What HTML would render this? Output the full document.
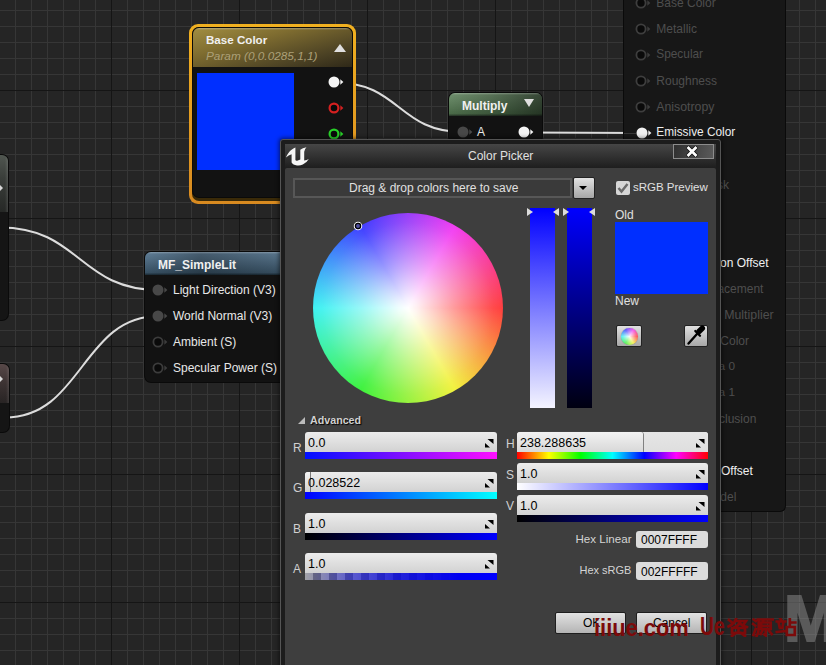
<!DOCTYPE html>
<html><head><meta charset="utf-8">
<style>
*{margin:0;padding:0;box-sizing:border-box}
html,body{width:826px;height:665px;overflow:hidden}
body{position:relative;font-family:"Liberation Sans",sans-serif;font-size:12px;color:#e8e8e8;
background-color:#252525;
background-image:
 linear-gradient(to right,#151515 1px,transparent 1px),
 linear-gradient(to bottom,#151515 1px,transparent 1px),
 linear-gradient(to right,#363636 1px,transparent 1px),
 linear-gradient(to bottom,#363636 1px,transparent 1px);
background-size:128px 665px,826px 128px,16px 665px,826px 16px;
background-position:111px 0,0 90px,15px 0,0 10px;
}
.a{position:absolute}
.t{position:absolute;white-space:nowrap;line-height:1}
svg.w{position:absolute;left:0;top:0}
.node{position:absolute;background:#121212;border-radius:6px;box-shadow:0 0 0 1px #0a0a0a}
</style></head><body>
<svg class="w" width="826" height="665" viewBox="0 0 826 665">
 <g fill="none" stroke="#dcdcdc" stroke-width="2">
  <path d="M335 82.5 C 400 82.5, 398 132, 463 132"/>
  <path d="M524 132.5 L 642 133"/>
  <path d="M0 227.5 C 80 227.5, 79 290, 159 290"/>
  <path d="M5 417.5 C 82 417.5, 82 316, 159 316"/>
 </g>
</svg>
<div class="node" style="left:-20px;top:155px;width:28px;height:165px;background:#151515;overflow:hidden"><div class="a" style="left:0;top:0;width:28px;height:57px;background:linear-gradient(to left,rgba(255,255,255,0.12) 0,rgba(255,255,255,0) 3px),linear-gradient(#505650,#3a3e3a 40%,#262826)"></div></div>
<div class="node" style="left:-20px;top:364px;width:29px;height:68px;background:#151515;overflow:hidden"><div class="a" style="left:0;top:0;width:29px;height:39px;background:linear-gradient(to left,rgba(255,255,255,0.1) 0,rgba(255,255,255,0) 3px),linear-gradient(#574848,#3e3434 45%,#282424)"></div></div>
<div class="a" style="left:0;top:185px;width:0;height:0;border-top:3px solid transparent;border-bottom:3px solid transparent;border-left:3px solid #d8d8d8"></div>
<div class="a" style="left:0;top:376px;width:0;height:0;border-top:3px solid transparent;border-bottom:3px solid transparent;border-left:3px solid #d8d8d8"></div>
<div class="a" style="left:189px;top:24px;width:167px;height:180px;background:linear-gradient(#f0b020,#d88a20);border-radius:9px"></div>
<div class="a" style="left:192px;top:27px;width:161px;height:174px;background:#3a2a08;border-radius:7px"></div>
<div class="node" style="left:193px;top:28px;width:159px;height:169px;border-radius:6px;overflow:hidden;background:#121212"><div class="a" style="left:0;top:0;width:159px;height:39px;background:linear-gradient(rgba(255,255,255,0.3) 0,rgba(255,255,255,0) 2px),linear-gradient(165deg,#a28e42 0%,#7e6c30 35%,#4c4224 75%,#2e2818 100%)"></div><div class="a" style="left:4px;top:45px;width:97px;height:97px;background:#002fff"></div></div>
<div class="t" style="left:206px;top:34.3px;color:#f0f0f0;font-size:11.6px;font-weight:bold;font-style:normal;">Base Color</div>
<div class="t" style="left:206px;top:50.7px;color:#aca078;font-size:11.8px;font-weight:normal;font-style:italic;">Param (0,0.0285,1,1)</div>
<div class="a" style="left:334px;top:44px;width:0;height:0;border-left:6px solid transparent;border-right:6px solid transparent;border-bottom:8px solid #e0e0e0"></div>
<svg class="a" style="left:326.3px;top:74.4px" width="20" height="16" viewBox="0 0 20 16"><circle cx="8" cy="8" r="5.5" fill="#f4f4f4"/><path d="M14.3,5.3 L17.4,8 L14.3,10.7 Z" fill="#f4f4f4"/></svg>
<svg class="a" style="left:326.2px;top:100.3px" width="20" height="16" viewBox="0 0 20 16"><circle cx="8" cy="8" r="4.4" fill="#0a0a0a" stroke="#d42020" stroke-width="2.2"/><path d="M14.3,5.3 L17.4,8 L14.3,10.7 Z" fill="#d42020"/></svg>
<svg class="a" style="left:326.2px;top:126.19999999999999px" width="20" height="16" viewBox="0 0 20 16"><circle cx="8" cy="8" r="4.4" fill="#0a0a0a" stroke="#28d028" stroke-width="2.2"/><path d="M14.3,5.3 L17.4,8 L14.3,10.7 Z" fill="#28d028"/></svg>
<div class="node" style="left:145px;top:252px;width:160px;height:130px;overflow:hidden;background:#121212"><div class="a" style="left:0;top:0;width:160px;height:23px;background:linear-gradient(rgba(255,255,255,0.25) 0,rgba(255,255,255,0) 2px),linear-gradient(to right,rgba(0,0,0,0.05) 0%,rgba(0,0,0,0.3) 35%,rgba(0,0,0,0.05) 100%),linear-gradient(#6686a0,#3a5468 90%,#1a2a34)"></div></div>
<div class="t" style="left:158px;top:259px;color:#f0f0f0;font-size:12px;font-weight:bold;font-style:normal;">MF_SimpleLit</div>
<div class="t" style="left:173px;top:284px;color:#e8e8e8;font-size:12px;font-weight:normal;font-style:normal;">Light Direction (V3)</div>
<div class="t" style="left:173px;top:310px;color:#e8e8e8;font-size:12px;font-weight:normal;font-style:normal;">World Normal (V3)</div>
<div class="t" style="left:173px;top:336px;color:#e8e8e8;font-size:12px;font-weight:normal;font-style:normal;">Ambient (S)</div>
<div class="t" style="left:173px;top:362px;color:#e8e8e8;font-size:12px;font-weight:normal;font-style:normal;">Specular Power (S)</div>
<svg class="a" style="left:150.3px;top:282.1px" width="20" height="16" viewBox="0 0 20 16"><circle cx="8" cy="8" r="5.5" fill="#484848"/><path d="M14.3,5.3 L17.4,8 L14.3,10.7 Z" fill="#484848"/></svg>
<svg class="a" style="left:150.3px;top:308.3px" width="20" height="16" viewBox="0 0 20 16"><circle cx="8" cy="8" r="5.5" fill="#484848"/><path d="M14.3,5.3 L17.4,8 L14.3,10.7 Z" fill="#484848"/></svg>
<svg class="a" style="left:150.3px;top:334.2px" width="20" height="16" viewBox="0 0 20 16"><circle cx="8" cy="8" r="4.6" fill="#0a0a0a" stroke="#3c3c3c" stroke-width="1.8"/><path d="M14.3,5.3 L17.4,8 L14.3,10.7 Z" fill="#3c3c3c"/></svg>
<svg class="a" style="left:150.3px;top:360.3px" width="20" height="16" viewBox="0 0 20 16"><circle cx="8" cy="8" r="4.6" fill="#0a0a0a" stroke="#3c3c3c" stroke-width="1.8"/><path d="M14.3,5.3 L17.4,8 L14.3,10.7 Z" fill="#3c3c3c"/></svg>
<div class="node" style="left:449px;top:93px;width:93px;height:50px;overflow:hidden;background:#121212"><div class="a" style="left:0;top:0;width:93px;height:23px;background:linear-gradient(rgba(255,255,255,0.25) 0,rgba(255,255,255,0) 2px),linear-gradient(to right,rgba(0,0,0,0) 0%,rgba(0,0,0,0.2) 45%,rgba(0,0,0,0.5) 100%),linear-gradient(#729270,#4a6a48 90%,#243024)"></div></div>
<div class="t" style="left:462px;top:100px;color:#f0f0f0;font-size:12px;font-weight:bold;font-style:normal;">Multiply</div>
<div class="a" style="left:524px;top:99px;width:0;height:0;border-left:5.5px solid transparent;border-right:5.5px solid transparent;border-top:8px solid #e0e0e0"></div>
<div class="t" style="left:477px;top:126px;color:#e8e8e8;font-size:12px;font-weight:normal;font-style:normal;">A</div>
<svg class="a" style="left:455.2px;top:124.4px" width="20" height="16" viewBox="0 0 20 16"><circle cx="8" cy="8" r="5.5" fill="#484848"/><path d="M14.3,5.3 L17.4,8 L14.3,10.7 Z" fill="#484848"/></svg>
<svg class="a" style="left:516.3px;top:124.4px" width="20" height="16" viewBox="0 0 20 16"><circle cx="8" cy="8" r="5.5" fill="#f4f4f4"/><path d="M14.3,5.3 L17.4,8 L14.3,10.7 Z" fill="#f4f4f4"/></svg>
<div class="node" style="left:624px;top:-20px;width:161px;height:531px;background:#171717;border-radius:5px"></div>
<div class="t" style="left:656.3px;top:-2.6999999999999997px;color:#4e4e4e;font-size:12px;font-weight:normal;font-style:normal;">Base Color</div>
<svg class="a" style="left:633.4px;top:-4.6px" width="20" height="16" viewBox="0 0 20 16"><circle cx="8" cy="8" r="4.6" fill="#0a0a0a" stroke="#3e3e3e" stroke-width="1.8"/><path d="M14.3,5.3 L17.4,8 L14.3,10.7 Z" fill="#3e3e3e"/></svg>
<div class="t" style="left:656.3px;top:23.299999999999997px;color:#4e4e4e;font-size:12px;font-weight:normal;font-style:normal;">Metallic</div>
<svg class="a" style="left:633.4px;top:21.4px" width="20" height="16" viewBox="0 0 20 16"><circle cx="8" cy="8" r="4.6" fill="#0a0a0a" stroke="#3e3e3e" stroke-width="1.8"/><path d="M14.3,5.3 L17.4,8 L14.3,10.7 Z" fill="#3e3e3e"/></svg>
<div class="t" style="left:656.3px;top:49.3px;color:#4e4e4e;font-size:11.85px;font-weight:normal;font-style:normal;">Specular</div>
<svg class="a" style="left:633.4px;top:47.4px" width="20" height="16" viewBox="0 0 20 16"><circle cx="8" cy="8" r="4.6" fill="#0a0a0a" stroke="#3e3e3e" stroke-width="1.8"/><path d="M14.3,5.3 L17.4,8 L14.3,10.7 Z" fill="#3e3e3e"/></svg>
<div class="t" style="left:656.3px;top:75.30000000000001px;color:#4e4e4e;font-size:12px;font-weight:normal;font-style:normal;">Roughness</div>
<svg class="a" style="left:633.4px;top:73.4px" width="20" height="16" viewBox="0 0 20 16"><circle cx="8" cy="8" r="4.6" fill="#0a0a0a" stroke="#3e3e3e" stroke-width="1.8"/><path d="M14.3,5.3 L17.4,8 L14.3,10.7 Z" fill="#3e3e3e"/></svg>
<div class="t" style="left:656.3px;top:101.30000000000001px;color:#4e4e4e;font-size:12.3px;font-weight:normal;font-style:normal;">Anisotropy</div>
<svg class="a" style="left:633.4px;top:99.4px" width="20" height="16" viewBox="0 0 20 16"><circle cx="8" cy="8" r="4.6" fill="#0a0a0a" stroke="#3e3e3e" stroke-width="1.8"/><path d="M14.3,5.3 L17.4,8 L14.3,10.7 Z" fill="#3e3e3e"/></svg>
<div class="t" style="left:656.3px;top:127.30000000000001px;color:#f0f0f0;font-size:11.85px;font-weight:normal;font-style:normal;">Emissive Color</div>
<div class="a" style="left:624px;top:132.9px;width:12px;height:1px;background:#383838;"></div>
<svg class="a" style="left:633.5px;top:125.4px" width="20" height="16" viewBox="0 0 20 16"><circle cx="8" cy="8" r="5.5" fill="#f0f0f0"/><path d="M14.3,5.3 L17.4,8 L14.3,10.7 Z" fill="#f0f0f0"/></svg>
<div class="t" style="left:656.3px;top:153.3px;color:#4e4e4e;font-size:12px;font-weight:normal;font-style:normal;">Opacity</div>
<svg class="a" style="left:633.4px;top:151.4px" width="20" height="16" viewBox="0 0 20 16"><circle cx="8" cy="8" r="4.6" fill="#0a0a0a" stroke="#3e3e3e" stroke-width="1.8"/><path d="M14.3,5.3 L17.4,8 L14.3,10.7 Z" fill="#3e3e3e"/></svg>
<div class="t" style="left:656.3px;top:179.3px;color:#4e4e4e;font-size:12px;font-weight:normal;font-style:normal;">Opacity Mask</div>
<svg class="a" style="left:633.4px;top:177.4px" width="20" height="16" viewBox="0 0 20 16"><circle cx="8" cy="8" r="4.6" fill="#0a0a0a" stroke="#3e3e3e" stroke-width="1.8"/><path d="M14.3,5.3 L17.4,8 L14.3,10.7 Z" fill="#3e3e3e"/></svg>
<div class="t" style="left:656.3px;top:205.3px;color:#4e4e4e;font-size:12px;font-weight:normal;font-style:normal;">Normal</div>
<svg class="a" style="left:633.4px;top:203.4px" width="20" height="16" viewBox="0 0 20 16"><circle cx="8" cy="8" r="4.6" fill="#0a0a0a" stroke="#3e3e3e" stroke-width="1.8"/><path d="M14.3,5.3 L17.4,8 L14.3,10.7 Z" fill="#3e3e3e"/></svg>
<div class="t" style="left:656.3px;top:231.3px;color:#4e4e4e;font-size:12px;font-weight:normal;font-style:normal;">Tangent</div>
<svg class="a" style="left:633.4px;top:229.4px" width="20" height="16" viewBox="0 0 20 16"><circle cx="8" cy="8" r="4.6" fill="#0a0a0a" stroke="#3e3e3e" stroke-width="1.8"/><path d="M14.3,5.3 L17.4,8 L14.3,10.7 Z" fill="#3e3e3e"/></svg>
<div class="t" style="left:656.3px;top:257.29999999999995px;color:#f0f0f0;font-size:12px;font-weight:normal;font-style:normal;">World Position Offset</div>
<svg class="a" style="left:633.4px;top:255.39999999999998px" width="20" height="16" viewBox="0 0 20 16"><circle cx="8" cy="8" r="4.6" fill="#0a0a0a" stroke="#3e3e3e" stroke-width="1.8"/><path d="M14.3,5.3 L17.4,8 L14.3,10.7 Z" fill="#3e3e3e"/></svg>
<div class="t" style="left:656.3px;top:283.29999999999995px;color:#4e4e4e;font-size:12px;font-weight:normal;font-style:normal;">World Displacement</div>
<svg class="a" style="left:633.4px;top:281.4px" width="20" height="16" viewBox="0 0 20 16"><circle cx="8" cy="8" r="4.6" fill="#0a0a0a" stroke="#3e3e3e" stroke-width="1.8"/><path d="M14.3,5.3 L17.4,8 L14.3,10.7 Z" fill="#3e3e3e"/></svg>
<div class="t" style="left:656.3px;top:309.29999999999995px;color:#4e4e4e;font-size:12.35px;font-weight:normal;font-style:normal;">Tessellation Multiplier</div>
<svg class="a" style="left:633.4px;top:307.4px" width="20" height="16" viewBox="0 0 20 16"><circle cx="8" cy="8" r="4.6" fill="#0a0a0a" stroke="#3e3e3e" stroke-width="1.8"/><path d="M14.3,5.3 L17.4,8 L14.3,10.7 Z" fill="#3e3e3e"/></svg>
<div class="t" style="left:656.3px;top:335.29999999999995px;color:#4e4e4e;font-size:12px;font-weight:normal;font-style:normal;">Subsurface Color</div>
<svg class="a" style="left:633.4px;top:333.4px" width="20" height="16" viewBox="0 0 20 16"><circle cx="8" cy="8" r="4.6" fill="#0a0a0a" stroke="#3e3e3e" stroke-width="1.8"/><path d="M14.3,5.3 L17.4,8 L14.3,10.7 Z" fill="#3e3e3e"/></svg>
<div class="t" style="left:656.3px;top:361.29999999999995px;color:#4e4e4e;font-size:11.8px;font-weight:normal;font-style:normal;">Custom Data 0</div>
<svg class="a" style="left:633.4px;top:359.4px" width="20" height="16" viewBox="0 0 20 16"><circle cx="8" cy="8" r="4.6" fill="#0a0a0a" stroke="#3e3e3e" stroke-width="1.8"/><path d="M14.3,5.3 L17.4,8 L14.3,10.7 Z" fill="#3e3e3e"/></svg>
<div class="t" style="left:656.3px;top:387.29999999999995px;color:#4e4e4e;font-size:11.8px;font-weight:normal;font-style:normal;">Custom Data 1</div>
<svg class="a" style="left:633.4px;top:385.4px" width="20" height="16" viewBox="0 0 20 16"><circle cx="8" cy="8" r="4.6" fill="#0a0a0a" stroke="#3e3e3e" stroke-width="1.8"/><path d="M14.3,5.3 L17.4,8 L14.3,10.7 Z" fill="#3e3e3e"/></svg>
<div class="t" style="left:656.3px;top:413.29999999999995px;color:#4e4e4e;font-size:12px;font-weight:normal;font-style:normal;">Ambient Occlusion</div>
<svg class="a" style="left:633.4px;top:411.4px" width="20" height="16" viewBox="0 0 20 16"><circle cx="8" cy="8" r="4.6" fill="#0a0a0a" stroke="#3e3e3e" stroke-width="1.8"/><path d="M14.3,5.3 L17.4,8 L14.3,10.7 Z" fill="#3e3e3e"/></svg>
<div class="t" style="left:656.3px;top:439.29999999999995px;color:#4e4e4e;font-size:12px;font-weight:normal;font-style:normal;">Refraction</div>
<svg class="a" style="left:633.4px;top:437.4px" width="20" height="16" viewBox="0 0 20 16"><circle cx="8" cy="8" r="4.6" fill="#0a0a0a" stroke="#3e3e3e" stroke-width="1.8"/><path d="M14.3,5.3 L17.4,8 L14.3,10.7 Z" fill="#3e3e3e"/></svg>
<div class="t" style="left:656.3px;top:465.29999999999995px;color:#f0f0f0;font-size:12px;font-weight:normal;font-style:normal;">Pixel Depth Offset</div>
<svg class="a" style="left:633.4px;top:463.4px" width="20" height="16" viewBox="0 0 20 16"><circle cx="8" cy="8" r="4.6" fill="#0a0a0a" stroke="#3e3e3e" stroke-width="1.8"/><path d="M14.3,5.3 L17.4,8 L14.3,10.7 Z" fill="#3e3e3e"/></svg>
<div class="t" style="left:656.3px;top:491.29999999999995px;color:#4e4e4e;font-size:12px;font-weight:normal;font-style:normal;">Shading Model</div>
<svg class="a" style="left:633.4px;top:489.4px" width="20" height="16" viewBox="0 0 20 16"><circle cx="8" cy="8" r="4.6" fill="#0a0a0a" stroke="#3e3e3e" stroke-width="1.8"/><path d="M14.3,5.3 L17.4,8 L14.3,10.7 Z" fill="#3e3e3e"/></svg>
<!-- Color picker dialog -->
<div class="a" style="left:280px;top:139px;width:441px;height:540px;background:#1c1c1c;border:1px solid #555;border-radius:3px;box-shadow:0 0 4px 1px rgba(0,0,0,0.55)"></div>
<div class="a" style="left:285px;top:144px;width:431px;height:24px;background:linear-gradient(#464646,#1e1e1e)"></div>
<div class="a" style="left:285px;top:168px;width:431px;height:510px;background:#3e3e3e;border-radius:2px"></div>
<div class="t" style="left:468px;top:150px;color:#e0e0e0">Color Picker</div>


<!-- title bar -->
<svg class="a" style="left:283px;top:143px" width="30" height="25" viewBox="0 0 30 25"><path fill="#f6f6f6" d="M3.0,14.5 C4.5,10.5 8.0,6.3 12.4,4.6 L12.4,17.0 Q12.8,18.0 14.2,17.7 L17.3,16.6 L17.3,6.8 Q19.5,5.0 23.5,4.2 Q21.3,6.3 21.2,8.8 L21.2,17.5 Q23.8,17.4 25.8,16.0 Q23.5,20.0 19.8,21.6 Q16.8,22.8 14.0,22.4 Q9.8,22.0 8.6,19.6 L8.6,11.2 Q5.5,12.2 3.0,14.5 Z"/></svg>
<div class="a" style="left:673px;top:144px;width:41px;height:15px;border:1px solid #8c8c8c;background:linear-gradient(100deg,#303030,#5a5a5a)"></div>
<svg class="a" style="left:685px;top:145px" width="14" height="13" viewBox="0 0 14 13"><path d="M3.5,3 L10.5,10 M10.5,3 L3.5,10" stroke="#101010" stroke-width="4.4" stroke-linecap="round"/><path d="M3.5,3 L10.5,10 M10.5,3 L3.5,10" stroke="#ffffff" stroke-width="2.7" stroke-linecap="square"/></svg>

<!-- drag drop bar -->
<div class="a" style="left:293px;top:178px;width:279px;height:20px;border:2px solid #575757;background:#3a3a3a"></div>
<div class="t" style="left:349px;top:182px;color:#e0e0e0">Drag &amp; drop colors here to save</div>
<div class="a" style="left:573px;top:177px;width:22px;height:22px;border:1px solid #222;border-radius:2px;background:linear-gradient(#e2e2e2,#a6a6a6)"></div>
<div class="a" style="left:579px;top:186px;width:0;height:0;border-left:4.5px solid transparent;border-right:4.5px solid transparent;border-top:4.5px solid #000"></div>
<div class="a" style="left:616px;top:181px;width:14px;height:14px;border-radius:2px;background:#d6d6d6"></div>
<svg class="a" style="left:616px;top:181px" width="14" height="14" viewBox="0 0 14 14"><path d="M2.5,7 L5.5,10.5 L11.5,3" fill="none" stroke="#6a6a6a" stroke-width="2.4"/></svg>
<div class="t" style="left:633px;top:182px;color:#e0e0e0;font-size:11.5px">sRGB Preview</div>

<!-- color wheel -->
<div class="a" style="left:313px;top:213px;width:190px;height:190px;border-radius:50%;background:radial-gradient(circle closest-side,rgba(255,255,255,1) 0%,rgba(255,255,255,0.92) 10%,rgba(255,255,255,0.82) 20%,rgba(255,255,255,0.72) 30%,rgba(255,255,255,0.62) 40%,rgba(255,255,255,0.52) 50%,rgba(255,255,255,0.43) 60%,rgba(255,255,255,0.34) 70%,rgba(255,255,255,0.25) 80%,rgba(255,255,255,0.16) 90%,rgba(255,255,255,0.1) 100%),conic-gradient(from 90deg,#ff2828,#f0f028,#28f028,#28f0f0,#2828ff,#f028f0,#ff2828)"></div>
<svg class="a" style="left:351px;top:219px" width="14" height="14" viewBox="0 0 14 14"><circle cx="7" cy="7" r="3.7" fill="none" stroke="#fff" stroke-width="1.1"/><circle cx="7" cy="7" r="2.6" fill="#5050a0" stroke="#000" stroke-width="1.3"/></svg>

<!-- sliders -->
<div class="a" style="left:530px;top:208px;width:25px;height:200px;background:linear-gradient(#0000ff,#f4f4ff)"></div>
<div class="a" style="left:567px;top:208px;width:25px;height:200px;background:linear-gradient(#0000ff,#000010)"></div>
<div class="a" style="left:527px;top:208px;width:0;height:0;border-top:4.5px solid transparent;border-bottom:4.5px solid transparent;border-left:6px solid #dcdcdc"></div>
<div class="a" style="left:553px;top:208px;width:0;height:0;border-top:4.5px solid transparent;border-bottom:4.5px solid transparent;border-right:6px solid #dcdcdc"></div>
<div class="a" style="left:563px;top:208px;width:0;height:0;border-top:4.5px solid transparent;border-bottom:4.5px solid transparent;border-left:6px solid #dcdcdc"></div>
<div class="a" style="left:589px;top:208px;width:0;height:0;border-top:4.5px solid transparent;border-bottom:4.5px solid transparent;border-right:6px solid #dcdcdc"></div>

<!-- old/new -->
<div class="t" style="left:615px;top:209px;color:#e0e0e0">Old</div>
<div class="a" style="left:615px;top:222px;width:93px;height:72px;background:#002fff"></div>
<div class="t" style="left:615px;top:295px;color:#e0e0e0">New</div>
<div class="a" style="left:616px;top:325px;width:26px;height:22px;border-radius:2px;border:1px solid #222;background:linear-gradient(#e0e0e0,#a8a8a8)"></div>
<div class="a" style="left:620.5px;top:327.5px;width:17px;height:17px;border-radius:50%;background:radial-gradient(circle closest-side,rgba(255,255,255,0.95),rgba(255,255,255,0.35) 70%,rgba(255,255,255,0.15)),conic-gradient(from 90deg,#f33,#ee3,#3e3,#3ee,#33f,#e3e,#f33);box-shadow:0 0 1px rgba(0,0,0,0.4)"></div>
<div class="a" style="left:684px;top:325px;width:24px;height:22px;border-radius:2px;border:1px solid #222;background:linear-gradient(#e0e0e0,#a8a8a8)"></div>
<svg class="a" style="left:684px;top:325px" width="24" height="22" viewBox="0 0 24 22"><path d="M4.5,18.5 L13,9" stroke="#000" stroke-width="2.4" stroke-linecap="round"/><path d="M11.3,6 L16,10.7" stroke="#000" stroke-width="2.3" stroke-linecap="round"/><path d="M15,6.5 L18.3,3.2" stroke="#000" stroke-width="5.5" stroke-linecap="round"/></svg>

<!-- advanced -->
<div class="a" style="left:298px;top:417px;width:0;height:0;border-left:7px solid transparent;border-bottom:7px solid #bbb"></div>
<div class="t" style="left:310px;top:414.5px;font-weight:bold;font-size:10.7px;color:#d0d0d0;text-shadow:1px 1px 1px #000">Advanced</div>


<!-- RGBA -->
<div class="t" style="left:293px;top:442px;color:#d0d0d0">R</div>
<div class="a" style="left:305px;top:432px;width:192px;height:20px;border-radius:3px 3px 0 0;background:linear-gradient(#ececec,#d2d2d2)"></div>
<div class="a" style="left:305px;top:452px;width:192px;height:7px;background:linear-gradient(to right,#0010ff,#ff10ff)"></div>
<div class="t" style="left:308px;top:437px;color:#000;font-size:12.5px">0.0</div>
<svg class="a" style="left:485px;top:439px" width="10" height="10" viewBox="0 0 10 10"><path d="M2.5,0 L8.5,0 L8.5,5 Z M0,4 L0,8.5 L5,8.5 Z" fill="#000"/></svg>
<div class="t" style="left:293px;top:482px;color:#d0d0d0">G</div>
<div class="a" style="left:305px;top:472px;width:192px;height:20px;border-radius:3px 3px 0 0;background:linear-gradient(#ececec,#d2d2d2)"></div>
<div class="a" style="left:305px;top:472px;width:5px;height:20px;border-radius:3px 0 0 0;background:linear-gradient(#f4f4f4,#cfcfcf);box-shadow:1px 0 0 #7a7a7a"></div>
<div class="a" style="left:305px;top:492px;width:192px;height:7px;background:linear-gradient(to right,#0000ff,#00ffff)"></div>
<div class="t" style="left:308px;top:477px;color:#000;font-size:12.5px">0.028522</div>
<svg class="a" style="left:485px;top:479px" width="10" height="10" viewBox="0 0 10 10"><path d="M2.5,0 L8.5,0 L8.5,5 Z M0,4 L0,8.5 L5,8.5 Z" fill="#000"/></svg>
<div class="t" style="left:293px;top:523px;color:#d0d0d0">B</div>
<div class="a" style="left:305px;top:513px;width:192px;height:20px;border-radius:3px 3px 0 0;background:linear-gradient(#ececec,#d2d2d2)"></div>
<div class="a" style="left:305px;top:533px;width:192px;height:7px;background:linear-gradient(to right,#000000,#0000ff)"></div>
<div class="t" style="left:308px;top:518px;color:#000;font-size:12.5px">1.0</div>
<svg class="a" style="left:485px;top:520px" width="10" height="10" viewBox="0 0 10 10"><path d="M2.5,0 L8.5,0 L8.5,5 Z M0,4 L0,8.5 L5,8.5 Z" fill="#000"/></svg>
<div class="t" style="left:293px;top:563px;color:#d0d0d0">A</div>
<div class="a" style="left:305px;top:553px;width:192px;height:20px;border-radius:3px 3px 0 0;background:linear-gradient(#ececec,#d2d2d2)"></div>
<div class="a" style="left:305px;top:573px;width:192px;height:7px;background:linear-gradient(to right,rgba(0,0,255,0) 0%,rgba(0,0,255,0.45) 25%,rgba(0,0,230,0.8) 50%,#0000f0 80%,#0000ff 100%),repeating-linear-gradient(to right,#a2a2a6 0 8px,#6e6e78 8px 16px)"></div>
<div class="t" style="left:308px;top:558px;color:#000;font-size:12.5px">1.0</div>
<svg class="a" style="left:485px;top:560px" width="10" height="10" viewBox="0 0 10 10"><path d="M2.5,0 L8.5,0 L8.5,5 Z M0,4 L0,8.5 L5,8.5 Z" fill="#000"/></svg>

<!-- HSV -->
<div class="t" style="left:506px;top:438px;color:#d0d0d0">H</div>
<div class="a" style="left:517px;top:432px;width:191px;height:20px;border-radius:3px 3px 0 0;background:linear-gradient(#ececec,#d2d2d2)"></div>
<div class="a" style="left:517px;top:432px;width:126px;height:20px;border-radius:3px 3px 0 0;background:linear-gradient(#f2f2f2,#d8d8d8);box-shadow:1px 0 1px #777"></div>
<div class="a" style="left:644px;top:432px;width:64px;height:20px;border-radius:0 3px 0 0;background:linear-gradient(#e6e6e6,#dedede)"></div>
<div class="a" style="left:517px;top:452px;width:191px;height:7px;background:linear-gradient(to right,#f00,#ff0,#0f0,#0ff,#00f,#f0f,#f00)"></div>
<div class="t" style="left:520px;top:437px;color:#000;font-size:12.5px">238.288635</div>
<svg class="a" style="left:696px;top:439px" width="10" height="10" viewBox="0 0 10 10"><path d="M2.5,0 L8.5,0 L8.5,5 Z M0,4 L0,8.5 L5,8.5 Z" fill="#000"/></svg>
<div class="t" style="left:506px;top:469px;color:#d0d0d0">S</div>
<div class="a" style="left:517px;top:463px;width:191px;height:20px;border-radius:3px 3px 0 0;background:linear-gradient(#ececec,#d2d2d2)"></div>
<div class="a" style="left:517px;top:483px;width:191px;height:7px;background:linear-gradient(to right,#fff,#00f)"></div>
<div class="t" style="left:520px;top:468px;color:#000;font-size:12.5px">1.0</div>
<svg class="a" style="left:696px;top:470px" width="10" height="10" viewBox="0 0 10 10"><path d="M2.5,0 L8.5,0 L8.5,5 Z M0,4 L0,8.5 L5,8.5 Z" fill="#000"/></svg>
<div class="t" style="left:506px;top:500px;color:#d0d0d0">V</div>
<div class="a" style="left:517px;top:495px;width:191px;height:20px;border-radius:3px 3px 0 0;background:linear-gradient(#ececec,#d2d2d2)"></div>
<div class="a" style="left:517px;top:515px;width:191px;height:7px;background:linear-gradient(to right,#000,#00f)"></div>
<div class="t" style="left:520px;top:500px;color:#000;font-size:12.5px">1.0</div>
<svg class="a" style="left:696px;top:502px" width="10" height="10" viewBox="0 0 10 10"><path d="M2.5,0 L8.5,0 L8.5,5 Z M0,4 L0,8.5 L5,8.5 Z" fill="#000"/></svg>

<!-- hex -->
<div class="t" style="left:575.5px;top:533px;color:#d4d4d4;font-size:11.6px">Hex Linear</div>
<div class="a" style="left:636px;top:531px;width:72px;height:17px;border-radius:3px;background:#dcdcdc"></div>
<div class="t" style="left:641px;top:534px;color:#000">0007FFFF</div>
<div class="t" style="left:579.5px;top:565px;color:#d4d4d4;font-size:11px">Hex sRGB</div>
<div class="a" style="left:636px;top:562px;width:72px;height:18px;border-radius:3px;background:#dcdcdc"></div>
<div class="t" style="left:641px;top:566px;color:#000">002FFFFF</div>

<!-- buttons -->
<div class="a" style="left:555px;top:612px;width:71px;height:22px;border:1px solid #1e1e1e;border-radius:2px;background:linear-gradient(#e2e2e2,#b4b4b4)"></div>
<div class="t" style="left:583px;top:617px;color:#000">OK</div>
<div class="a" style="left:636px;top:612px;width:71px;height:22px;border:1px solid #1e1e1e;border-radius:2px;background:linear-gradient(#e2e2e2,#b4b4b4)"></div>
<div class="t" style="left:653px;top:617px;color:#000">Cancel</div>

<!-- watermark -->
<div class="t" style="left:784px;top:587px;font-size:64px;font-weight:bold;color:#909090;-webkit-text-stroke:2px #909090;opacity:0.5">M</div>
<div class="t" style="left:594px;top:617px;font-size:23px;font-weight:bold;color:#7c0a0a;transform:scaleX(0.95);transform-origin:0 0">iiiue.com</div>
<div class="t" style="left:700px;top:614px;font-size:25px;font-weight:bold;color:#7c0a0a;transform:scaleX(0.77);transform-origin:0 0">Ue</div>
<svg class="a" style="left:727px;top:617.5px" width="70" height="19" viewBox="0 0 70 19"><g fill="none" stroke="#7c0a0a" stroke-width="2.7" stroke-linecap="square">
<path d="M2,2 L4.5,4 M1.5,8.5 L5,6.5 M9,1 L7,5 M8,3 L19,3 L17,6 M13,3 Q12.5,7 8,9 M13.5,5.5 Q15,8 20,9 M5,10 L18,10 L18,15 L5,15 Z M11.5,11 L11.5,14 M9,15 L5,18 M14,15 L18,18"/>
<g transform="translate(25.7,0)"><path d="M1,1.5 L3,3 M0.5,6 L2.5,7.5 M0.8,17 L3,11 M5,1.5 L20,1.5 M6,1.5 L6,10 Q6,15 4,18 M11,2 L10,4 M8.5,4.5 L18,4.5 L18,11 L8.5,11 Z M8.5,7.8 L18,7.8 M13,11 L13,17.5 L11.5,16.5 M9.5,13 L8,16 M16.5,13 L19,16"/></g>
<g transform="translate(49.3,0)"><path d="M4,0.5 L5,2 M0.5,3.5 L9,3.5 M2.5,5.5 L3.5,10 M7,5 L6,10 M0.5,14 L9,13 M13.5,0.5 L13.5,8.5 M13.5,4.5 L19,4.5 M10.5,9 L18.5,9 L18.5,17 L10.5,17 Z"/></g>
</g></svg>

</body></html>
